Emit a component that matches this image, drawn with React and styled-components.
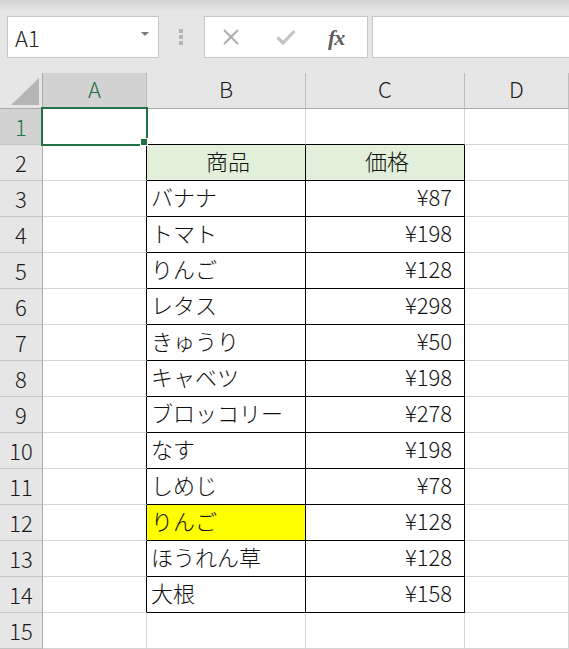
import React from "react";
import styled, { createGlobalStyle } from "styled-components";

const GlobalStyle = createGlobalStyle`
  html, body { margin: 0; padding: 0; background: #ffffff; overflow: hidden; }
  body { font-family: "Noto Sans CJK JP", "Noto Sans", sans-serif; }
`;

const FONT = `"Noto Sans CJK JP", "Noto Sans", sans-serif`;
const GREEN = "#217346";

const Page = styled.div`
  width: 569px;
  height: 649px;
  overflow: hidden;
  background: #ffffff;
`;

const Toolbar = styled.div`
  height: 73px;
  box-sizing: border-box;
  padding: 16px 0 0 7px;
  background: linear-gradient(#d3d3d3 0px, #e6e6e6 12px);
  display: flex;
  align-items: flex-start;
`;

const NameBox = styled.div`
  width: 152px;
  height: 42px;
  box-sizing: border-box;
  border: 1px solid #c6c6c6;
  background: #ffffff;
  display: flex;
  align-items: center;
  justify-content: space-between;
  padding: 0 9px 0 7px;
  font-family: ${FONT};
  font-weight: 300;
  font-size: 22px;
  color: #222;
`;

const NameText = styled.span`
  margin-top: 0;
`;

const Arrow = styled.span`
  width: 0;
  height: 0;
  border-left: 4px solid transparent;
  border-right: 4px solid transparent;
  border-top: 4px solid #7a7a7a;
  margin-top: -6px;
`;

const Dots = styled.div`
  margin: 13px 0 0 20px;
  display: flex;
  flex-direction: column;
  gap: 2px;
`;

const Dot = styled.span`
  width: 4px;
  height: 4px;
  background: #b4b4b4;
`;

const FormulaButtons = styled.div`
  margin-left: 21px;
  width: 164px;
  height: 42px;
  box-sizing: border-box;
  border: 1px solid #c6c6c6;
  background: #ffffff;
  display: flex;
  align-items: center;
  padding-left: 17px;
`;

const IconSlot = styled.span`
  display: flex;
  align-items: center;
  width: ${(p) => p.$w}px;
`;

const Fx = styled.span`
  font-family: "Liberation Serif", "DejaVu Serif", serif;
  font-style: italic;
  font-weight: bold;
  font-size: 22px;
  color: #5e5e5e;
  letter-spacing: -1px;
  margin-top: 1px;
`;

const FormulaInput = styled.div`
  margin-left: 4px;
  flex: 1;
  height: 42px;
  box-sizing: border-box;
  border: 1px solid #c6c6c6;
  border-right: none;
  background: #ffffff;
`;

const Sheet = styled.div`
  display: grid;
  grid-template-columns: 43px 104px 159px 159px 1fr;
  grid-auto-rows: 36px;
  font-family: ${FONT};
  font-weight: 300;
`;

const Corner = styled.div`
  background: #e6e6e6;
  border-right: 1px solid #ababab;
  border-bottom: 1px solid #ababab;
  display: flex;
  align-items: flex-end;
  justify-content: flex-end;
  padding: 0 3px 3px 0;
`;

const ColHead = styled.div`
  background: ${(p) => (p.$active ? "#d2d2d2" : "#e6e6e6")};
  border-right: 1px solid #bdbdbd;
  border-bottom: 1px solid ${(p) => (p.$active ? GREEN : "#ababab")};
  box-shadow: ${(p) => (p.$active ? `inset 0 -1px 0 ${GREEN}` : "none")};
  display: flex;
  align-items: center;
  justify-content: center;
  padding-bottom: 5px;
  font-size: 22px;
  color: ${(p) => (p.$active ? GREEN : "#1a1a1a")};
`;

const RowHead = styled.div`
  background: ${(p) => (p.$active ? "#d2d2d2" : "#e6e6e6")};
  border-right: 1px solid #ababab;
  border-bottom: 1px solid #c4c4c4;
  display: flex;
  align-items: center;
  justify-content: center;
  padding-bottom: 2px;
  font-size: 22px;
  color: ${(p) => (p.$active ? GREEN : "#1a1a1a")};
`;

const Cell = styled.div`
  position: relative;
  background: ${(p) => p.$bg || "#ffffff"};
  border-right: 1px solid ${(p) => p.$right || "#d4d4d4"};
  border-bottom: 1px solid ${(p) => p.$bottom || "#d4d4d4"};
  display: flex;
  align-items: center;
  justify-content: ${(p) =>
    p.$align === "right" ? "flex-end" : p.$align === "center" ? "center" : "flex-start"};
  padding: ${(p) => (p.$align === "right" ? "0 12px 5px 0" : "0 0 5px 4px")};
  font-size: 22px;
  color: #111111;
  white-space: nowrap;
  overflow: visible;
`;

const Selection = styled.div`
  position: absolute;
  left: -2px;
  top: -2px;
  width: 107px;
  height: 39px;
  box-sizing: border-box;
  border: 2px solid ${GREEN};
  z-index: 2;
  pointer-events: none;
`;

const Handle = styled.span`
  position: absolute;
  left: 97px;
  top: 29px;
  width: 8px;
  height: 8px;
  box-sizing: border-box;
  border: 1px solid #ffffff;
  background: ${GREEN};
`;

const table = {
  2: { b: "商品", c: "価格", head: true },
  3: { b: "バナナ", c: "¥87" },
  4: { b: "トマト", c: "¥198" },
  5: { b: "りんご", c: "¥128" },
  6: { b: "レタス", c: "¥298" },
  7: { b: "きゅうり", c: "¥50" },
  8: { b: "キャベツ", c: "¥198" },
  9: { b: "ブロッコリー", c: "¥278" },
  10: { b: "なす", c: "¥198" },
  11: { b: "しめじ", c: "¥78" },
  12: { b: "りんご", c: "¥128", yellow: true },
  13: { b: "ほうれん草", c: "¥128" },
  14: { b: "大根", c: "¥158" },
};

const inTable = (r, c) => r >= 2 && r <= 14 && (c === 1 || c === 2);

function CloseIcon() {
  return (
    <svg width="18" height="16" viewBox="0 0 18 16">
      <path d="M2 1 L16 15 M16 1 L2 15" stroke="#adadad" strokeWidth="2" fill="none" />
    </svg>
  );
}

function CheckIcon() {
  return (
    <svg width="20" height="16" viewBox="0 0 20 16">
      <path d="M1.5 8.5 L7 14 L18.5 2" stroke="#c4c4c4" strokeWidth="3.2" fill="none" />
    </svg>
  );
}

function CornerTriangle() {
  return (
    <svg width="28" height="27" viewBox="0 0 28 27">
      <polygon points="0,27 28,27 28,0" fill="#b5b5b5" />
    </svg>
  );
}

export default function App() {
  const rows = [];
  for (let r = 1; r <= 15; r++) {
    const d = table[r];
    rows.push(
      <RowHead key={`h${r}`} $active={r === 1}>
        {r}
      </RowHead>
    );
    for (let c = 0; c < 4; c++) {
      const right = inTable(r, c) || inTable(r, c + 1) ? "#000000" : undefined;
      const bottom = inTable(r, c) || inTable(r + 1, c) ? "#000000" : undefined;
      let content = null;
      let align = "left";
      let bg;
      if (d && c === 1) {
        content = d.b;
        if (d.head) {
          align = "center";
          bg = "#e2efda";
        }
        if (d.yellow) bg = "#ffff00";
      } else if (d && c === 2) {
        content = d.c;
        if (d.head) {
          align = "center";
          bg = "#e2efda";
        } else align = "right";
      }
      rows.push(
        <Cell key={`${r}-${c}`} $right={right} $bottom={bottom} $align={align} $bg={bg}>
          {content}
          {r === 1 && c === 0 && (
            <Selection>
              <Handle />
            </Selection>
          )}
        </Cell>
      );
    }
  }

  return (
    <Page>
      <GlobalStyle />
      <Toolbar>
        <NameBox>
          <NameText>A1</NameText>
          <Arrow />
        </NameBox>
        <Dots>
          <Dot />
          <Dot />
          <Dot />
        </Dots>
        <FormulaButtons>
          <IconSlot $w={54}>
            <CloseIcon />
          </IconSlot>
          <IconSlot $w={52}>
            <CheckIcon />
          </IconSlot>
          <IconSlot $w={30}>
            <Fx>fx</Fx>
          </IconSlot>
        </FormulaButtons>
        <FormulaInput />
      </Toolbar>
      <Sheet>
        <Corner>
          <CornerTriangle />
        </Corner>
        <ColHead $active>A</ColHead>
        <ColHead>B</ColHead>
        <ColHead>C</ColHead>
        <ColHead>D</ColHead>
        {rows}
      </Sheet>
    </Page>
  );
}
